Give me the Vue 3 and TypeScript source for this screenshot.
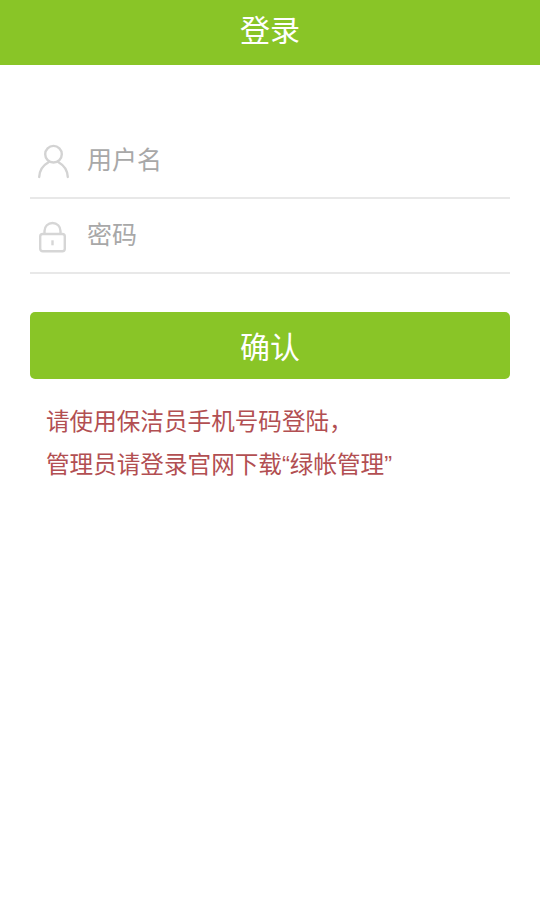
<script setup lang="ts">
const title = '登录'
</script>

<template>
  <div class="page">
    <header class="bar">{{ title }}</header>
    <form class="form" @submit.prevent>
      <div class="field">
        <svg class="icon" width="32" height="36" viewBox="0 0 32 36" fill="none" stroke="#d3d3d3" stroke-width="2.4" stroke-linecap="round">
          <circle cx="16.5" cy="11.2" r="8.3" />
          <path d="M2.2 34C2.5 27 6.5 22 11.5 19.2M30.8 34C30.5 27 26.5 22 21.5 19.2" />
        </svg>
        <span class="hint">用户名</span>
      </div>
      <div class="field">
        <svg class="icon" width="32" height="36" viewBox="0 0.7 32 36" fill="none" stroke="#d6d6d6" stroke-width="2.4">
          <rect x="3.2" y="16.7" width="24.6" height="17.3" rx="2.5" />
          <path d="M7.5 16.7V13.7C7.5 9 11 5.7 15.5 5.7S23.5 9 23.5 13.7V16.7" />
          <path d="M15.5 23v5" />
        </svg>
        <span class="hint">密码</span>
      </div>
      <button class="submit" type="submit">确认</button>
      <p class="note">请使用保洁员手机号码登陆，<br />管理员请登录官网下载“绿帐管理”</p>
    </form>
  </div>
</template>

<style scoped>
.page {
  min-height: 923px;
  background: #fff;
  font-family: "Liberation Sans", "Noto Sans CJK SC", sans-serif;
}
.bar {
  height: 65px;
  background: #89c527;
  color: #fff;
  font-size: 30px;
  line-height: 62px;
  text-align: center;
}
.form {
  display: flex;
  flex-direction: column;
  padding: 59px 30px 0;
}
.field {
  display: flex;
  align-items: center;
  gap: 18px;
  height: 75px;
  padding-left: 7px;
  border-bottom: 2px solid #e8e8e8;
  box-sizing: border-box;
}
.icon {
  flex: none;
}
.hint {
  color: #a8a8a8;
  font-size: 25px;
  line-height: 1;
}
.submit {
  height: 67px;
  margin-top: 38px;
  border: none;
  border-radius: 5px;
  background: #89c527;
  color: #fff;
  font-family: inherit;
  font-size: 30px;
  padding: 0 0 2px;
}
.note {
  margin: 22px 0 0;
  padding-left: 16px;
  color: #b24f52;
  font-size: 23.6px;
  line-height: 43px;
}
</style>
